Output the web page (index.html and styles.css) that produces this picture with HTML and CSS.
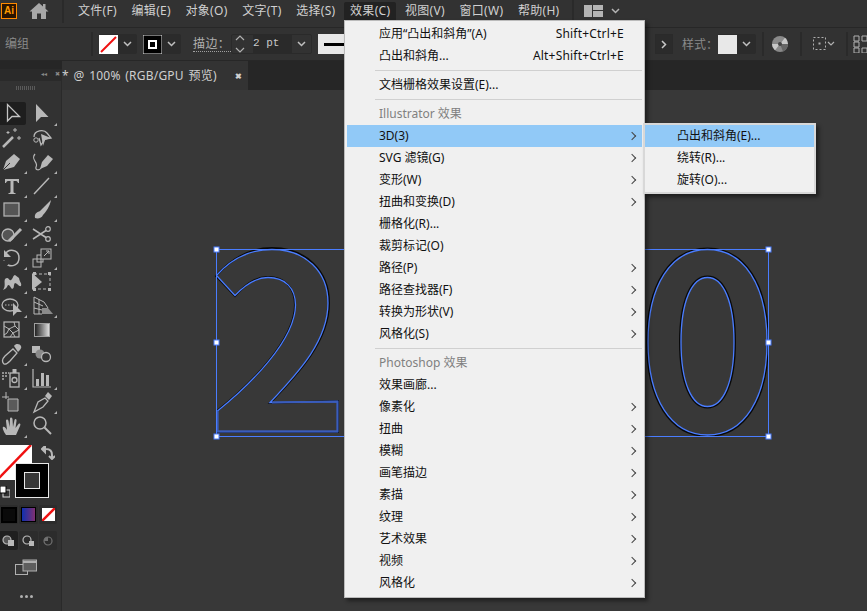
FILE: index.html
```html
<!DOCTYPE html>
<html lang="zh-CN">
<head>
<meta charset="utf-8">
<title>Illustrator</title>
<link rel="stylesheet" href="styles.css">
</head>
<body>
<div class="app">
  <header class="menubar">
    <div class="logo">Ai</div>
    <svg class="home" width="20" height="18" viewBox="0 0 20 18"><path d="M10 1 0.5 9.500H3V17H8V11.500H12V17H17V9.500H19.500L16.500 6.800V2H14V4.600Z" fill="#a8a8a8"/></svg>
    <div class="vsep home-sep"></div>
    <nav class="menus">
      <span class="m">文件(F)</span><span class="m">编辑(E)</span><span class="m">对象(O)</span><span class="m">文字(T)</span><span class="m">选择(S)</span><span class="m active">效果(C)</span><span class="m">视图(V)</span><span class="m">窗口(W)</span><span class="m">帮助(H)</span>
    </nav>
    <div class="vsep layout-sep"></div>
    <svg class="layout" width="19" height="12" viewBox="0 0 19 12"><path d="M0 0H8V12H0ZM9 0H19V5H9ZM9 6H19V12H9Z" fill="#b4b4b4"/></svg>
    <svg class="chev layout-chev" width="9" height="6" viewBox="0 0 9 6"><path d="M1 1 4.500 4.500 8 1" fill="none" stroke="#b4b4b4" stroke-width="1.500"/></svg>
  </header>

  <section class="controlbar">
    <span class="cb-label">编组</span>
    <div class="vsep cb-sep1"></div>
    <div class="combo fill-combo">
      <svg class="swatch" width="19" height="19" viewBox="0 0 19 19"><rect width="19" height="19" fill="#fff"/><path d="M2 17 17 2" stroke="#f01010" stroke-width="2"/></svg>
      <svg class="chev" width="9" height="6" viewBox="0 0 9 6"><path d="M1 1 4.500 4.500 8 1" fill="none" stroke="#c0c0c0" stroke-width="1.500"/></svg>
    </div>
    <div class="combo stroke-combo">
      <svg class="swatch" width="19" height="19" viewBox="0 0 19 19"><rect width="19" height="19" fill="#000" stroke="#e8e8e8"/><rect x="6" y="6" width="7" height="7" fill="none" stroke="#fff" stroke-width="2"/></svg>
      <svg class="chev" width="9" height="6" viewBox="0 0 9 6"><path d="M1 1 4.500 4.500 8 1" fill="none" stroke="#c0c0c0" stroke-width="1.500"/></svg>
    </div>
    <span class="stroke-label">描边：</span>
    <div class="spin">
      <svg class="updown" width="10" height="18" viewBox="0 0 10 18"><path d="M1 5 5 1 9 5M1 13 5 17 9 13" fill="none" stroke="#b0b0b0" stroke-width="1.200"/></svg>
      <span class="spin-val">2 pt</span>
      <svg class="chev" width="9" height="6" viewBox="0 0 9 6"><path d="M1 1 4.500 4.500 8 1" fill="none" stroke="#c0c0c0" stroke-width="1.500"/></svg>
    </div>
    <div class="line-box"><i></i></div>
    <div class="cb-right">
      <div class="next"><svg width="6" height="9" viewBox="0 0 6 9"><path d="M1 1 4.500 4.500 1 8" fill="none" stroke="#c8c8c8" stroke-width="1.500"/></svg></div>
      <span class="style-label">样式：</span>
      <div class="combo style-combo">
        <span class="style-swatch"></span>
        <svg class="chev" width="9" height="6" viewBox="0 0 9 6"><path d="M1 1 4.500 4.500 8 1" fill="none" stroke="#c0c0c0" stroke-width="1.500"/></svg>
      </div>
      <div class="vsep sep-a"></div>
      <svg class="globe" width="16" height="16" viewBox="0 0 16 16"><circle cx="8" cy="8" r="8" fill="#8a8a8a"/><path d="M8 8 13 1.800A8 8 0 0 1 16 8ZM8 8 3 14.200A8 8 0 0 1 0 8Z" fill="#c8c8c8"/><path d="M8 8 16 8A8 8 0 0 1 11 15.400Z" fill="#666"/><circle cx="8" cy="8" r="2" fill="#444"/></svg>
      <div class="vsep sep-b"></div>
      <svg class="align" width="23" height="16" viewBox="0 0 23 16"><rect x="1.500" y="1.500" width="12" height="12" fill="none" stroke="#b0b0b0" stroke-dasharray="2 2"/><rect x="6.500" y="6.500" width="2" height="2" fill="#b0b0b0"/><path d="M16 6 19 9 22 6" fill="none" stroke="#b0b0b0" stroke-width="1.200"/></svg>
      <div class="vsep sep-c"></div>
      <svg class="grid-ico" width="14" height="18" viewBox="0 0 14 18"><path d="M1 1H6V6H1ZM9 1H14V6H9ZM1 7H6V12H1ZM1 13H6V18H1ZM9 13H14V18H9Z" fill="none" stroke="#b0b0b0"/></svg>
    </div>
  </section>

  <main class="workspace">
    <aside class="sidebar">
      <div class="panel-head"><span class="collapse">◂◂</span><span class="close">✖</span></div>
      <div class="toolbar">
        <div class="grip"></div>
        <div class="tools">
          <div class="tool selected"><svg width="24" height="24" viewBox="0 0 24 24"><path d="M6.500 2.500V19L11 14.500H18.500Z" fill="none" stroke="#c4c4c4" stroke-width="1.300"/></svg></div>
          <div class="tool more"><svg width="24" height="24" viewBox="0 0 24 24"><path d="M6 2V20L11 15H18.500Z" fill="#b8b8b8"/></svg></div>
          <div class="tool"><svg width="24" height="24" viewBox="0 0 24 24"><path d="M3 21 13 11" stroke="#b8b8b8" stroke-width="2.500"/><path d="M15 2V6M13 4H17M8 5V8M6.500 6.500H9.500M19 10V14M17 12H21" stroke="#b8b8b8"/></svg></div>
          <div class="tool"><svg width="24" height="24" viewBox="0 0 24 24"><path d="M4 11C4 4 14 3 17 7M17 7 21 12 15 13 11 19 9 12" fill="none" stroke="#b8b8b8" stroke-width="1.300"/><path d="M11 8 21 12 15 14 13 20Z" fill="#b8b8b8"/><circle cx="6" cy="14" r="2.200" fill="none" stroke="#b8b8b8"/></svg></div>
          <div class="tool more"><svg width="24" height="24" viewBox="0 0 24 24"><path d="M3 20 6 11 14 4 20 9 14 17Z" fill="#b8b8b8"/><path d="M3 20 10 13" stroke="#323232"/></svg></div>
          <div class="tool more"><svg width="24" height="24" viewBox="0 0 24 24"><path d="M10 19 12 12 18 5 23 9 17 16Z" fill="#b8b8b8"/><path d="M5 4C0 10 9 12 6 17C5 20 9 21 11 18" fill="none" stroke="#b8b8b8" stroke-width="1.200"/></svg></div>
          <div class="tool more"><svg width="24" height="24" viewBox="0 0 24 24"><path d="M5 5H19V9H18C17.500 7.500 17 7 15 7H13.500V17.500C13.500 18.500 14 19 15.500 19V20H8.500V19C10 19 10.500 18.500 10.500 17.500V7H9C7 7 6.500 7.500 6 9H5Z" fill="#b8b8b8"/></svg></div>
          <div class="tool more"><svg width="24" height="24" viewBox="0 0 24 24"><path d="M4 20 19 4" stroke="#b8b8b8" stroke-width="1.400"/></svg></div>
          <div class="tool more"><svg width="24" height="24" viewBox="0 0 24 24"><rect x="4" y="5" width="15" height="13" fill="#555" stroke="#b0b0b0" stroke-width="1.300"/></svg></div>
          <div class="tool more"><svg width="24" height="24" viewBox="0 0 24 24"><path d="M5 20C4 15 8 14 10 13L21 2C20 8 16 14 13 17C12 20 8 21 5 20Z" fill="#b8b8b8"/></svg></div>
          <div class="tool more"><svg width="24" height="24" viewBox="0 0 24 24"><circle cx="8" cy="13" r="6" fill="#555" stroke="#b8b8b8" stroke-width="1.300"/><path d="M9 19 21 7" stroke="#b8b8b8" stroke-width="3"/></svg></div>
          <div class="tool more"><svg width="24" height="24" viewBox="0 0 24 24"><circle cx="18" cy="7" r="2.300" fill="none" stroke="#b8b8b8" stroke-width="1.200"/><circle cx="18" cy="17" r="2.300" fill="none" stroke="#b8b8b8" stroke-width="1.200"/><path d="M3 7 16 15.500M3 17 16 8.500" stroke="#b8b8b8" stroke-width="1.500"/></svg></div>
          <div class="tool more"><svg width="24" height="24" viewBox="0 0 24 24"><path d="M5 9C8 2 19 3 19 12C19 19 12 21 8 19" fill="none" stroke="#b8b8b8" stroke-width="1.500"/><path d="M4 4V11H11Z" fill="#b8b8b8"/><path d="M4 14V16M7 19 8 20" stroke="#909090" stroke-dasharray="1 1"/></svg></div>
          <div class="tool more"><svg width="24" height="24" viewBox="0 0 24 24"><rect x="3" y="13" width="8" height="8" fill="none" stroke="#b8b8b8"/><rect x="7" y="9" width="6" height="7" fill="none" stroke="#b8b8b8"/><rect x="11" y="3" width="10" height="10" fill="#323232" stroke="#b8b8b8"/><path d="M14 10 19 5M16 5H19V8" fill="none" stroke="#b8b8b8"/></svg></div>
          <div class="tool more"><svg width="24" height="24" viewBox="0 0 24 24"><path d="M3 20C7 15 2 9 7 8C9 8 9 11 11 10C13 9 13 5 15 5L19 8C20 13 22 13 21 16C19 17 17 13 15 13C13 15 15 18 12 19C10 17 10 15 8 15C7 17 6 19 3 20Z" fill="#b8b8b8"/></svg></div>
          <div class="tool"><svg width="24" height="24" viewBox="0 0 24 24"><rect x="4" y="4" width="16" height="15" fill="none" stroke="#b8b8b8" stroke-dasharray="3 2"/><path d="M2 3V20L12 12Z" fill="#b8b8b8"/><path d="M3 2H6V5H3ZM18 2H21V5H18ZM18 18H21V21H18ZM3 18H6V21H3Z" fill="#b8b8b8"/></svg></div>
          <div class="tool more"><svg width="24" height="24" viewBox="0 0 24 24"><ellipse cx="10" cy="11" rx="8" ry="6" fill="none" stroke="#b8b8b8" stroke-width="1.300"/><path d="M5 11H13" stroke="#b8b8b8" stroke-dasharray="1.500 1.500"/><path d="M13 9V22L17 18 22 18Z" fill="#b8b8b8"/></svg></div>
          <div class="tool more"><svg width="24" height="24" viewBox="0 0 24 24"><path d="M4 3V20H12M4 3 14 8 18 14M4 8 13 12M4 14 12 16M9 5V20" fill="none" stroke="#b8b8b8"/><path d="M12 14H18L23 20H12Z" fill="#8a8a8a"/></svg></div>
          <div class="tool"><svg width="24" height="24" viewBox="0 0 24 24"><rect x="4" y="4" width="15" height="15" fill="none" stroke="#b8b8b8" stroke-width="1.200"/><path d="M4 8 9 11 7 15 4 17M9 11 15 8 14 4M15 8 19 12 13 15 15 19M9 11 13 15 10 19" fill="none" stroke="#b8b8b8"/></svg></div>
          <div class="tool"><div class="gradient-tool"></div></div>
          <div class="tool more"><svg width="24" height="24" viewBox="0 0 24 24"><path d="M4 22C1 19 3 16 5 14L13 7 17 11 10 19C8 21 6 23 4 22Z" fill="none" stroke="#b8b8b8" stroke-width="1.300"/><path d="M14 4C16 1 20 2 21 4C22 6 20 8 18 10Z" fill="#b8b8b8"/></svg></div>
          <div class="tool"><svg width="24" height="24" viewBox="0 0 24 24"><rect x="2" y="4" width="8" height="7" fill="#b8b8b8"/><circle cx="10" cy="12" r="4.500" fill="#8a8a8a"/><circle cx="16" cy="15" r="4.500" fill="#323232" stroke="#b8b8b8" stroke-width="1.300"/></svg></div>
          <div class="tool more"><svg width="24" height="24" viewBox="0 0 24 24"><rect x="10" y="7" width="9" height="14" fill="none" stroke="#b8b8b8" stroke-width="1.300"/><rect x="12.500" y="3" width="4" height="4" fill="#b8b8b8"/><circle cx="14.500" cy="14" r="2.500" fill="none" stroke="#b8b8b8" stroke-width="1.300"/><path d="M2 6H4V8H2ZM5 6H7V8H5ZM8 6H9V8H8ZM2 9H4V11H2ZM5 9H7V11H5ZM2 12H4V14H2Z" fill="#909090"/></svg></div>
          <div class="tool more"><svg width="24" height="24" viewBox="0 0 24 24"><path d="M3 3V21H21" fill="none" stroke="#b8b8b8" stroke-width="1.200"/><path d="M6 13H9V20H6ZM11 7H14V20H11ZM16 9H19V20H16Z" fill="#b8b8b8"/></svg></div>
          <div class="tool"><svg width="24" height="24" viewBox="0 0 24 24"><path d="M2 7H9M6 2V9" stroke="#b8b8b8"/><path d="M8 9H18V21H8Z" fill="#5a5a5a" stroke="#b8b8b8"/></svg></div>
          <div class="tool more"><svg width="24" height="24" viewBox="0 0 24 24"><path d="M4 22 8 12 15 8 18 11 13 17Z" fill="none" stroke="#b8b8b8" stroke-width="1.300"/><path d="M15 6 18 2 22 6 19 10Z" fill="#b8b8b8"/></svg></div>
          <div class="tool more"><svg width="24" height="24" viewBox="0 0 24 24"><path d="M6 21C4 18 2 14 3 13C4 12 6 14 7 16L6 7C6 5 8 5 8.500 7L9.500 13 10 5C10 3 12 3 12.500 5L13 13 14.500 6C15 4 17 5 16.500 7L15.500 14 18.500 10C20 9 21 10 20 12L16 21Z" fill="#b8b8b8"/></svg></div>
          <div class="tool"><svg width="24" height="24" viewBox="0 0 24 24"><circle cx="10" cy="9" r="6" fill="none" stroke="#b8b8b8" stroke-width="1.500"/><path d="M14.500 13.500 21 20" stroke="#b8b8b8" stroke-width="2"/></svg></div>
        </div>
        <div class="color-block">
          <svg class="fill-big" width="32" height="35" viewBox="0 0 32 35"><rect width="32" height="35" fill="#fff"/><path d="M-1 33 31 0" stroke="#f01010" stroke-width="2.500"/></svg>
          <svg class="swap" width="14" height="14" viewBox="0 0 14 14"><path d="M1 3H5C9 3 11 5 11 9V12M1 3 4 0V6ZM8 10 11 13 14 10" fill="none" stroke="#b8b8b8" stroke-width="2"/></svg>
          <div class="stroke-big"><i></i></div>
          <svg class="default-mini" width="10" height="12" viewBox="0 0 10 12"><rect x="3" y="4" width="7" height="7" fill="#323232" stroke="#ddd"/><rect x="0" y="0" width="6" height="7" fill="#fff" stroke="#000"/></svg>
        </div>
        <div class="modes">
          <div class="mode"><i class="mode-black"></i></div>
          <div class="mode"><i class="mode-grad"></i></div>
          <div class="mode"><svg width="13" height="13" viewBox="0 0 13 13"><rect width="13" height="13" fill="#fff"/><path d="M0 13 13 0" stroke="#f01010" stroke-width="2.500"/></svg></div>
        </div>
        <div class="modes draw">
          <div class="mode on"><svg width="14" height="12" viewBox="0 0 14 12"><circle cx="5" cy="5" r="4" fill="#555" stroke="#b8b8b8" stroke-width="1.200"/><rect x="6" y="5" width="6" height="6" fill="#b8b8b8"/></svg></div>
          <div class="mode"><svg width="14" height="12" viewBox="0 0 14 12"><circle cx="5" cy="5" r="4" fill="none" stroke="#b8b8b8" stroke-width="1.200"/><rect x="7" y="6" width="5" height="5" fill="#b8b8b8"/></svg></div>
          <div class="mode"><svg width="14" height="12" viewBox="0 0 14 12"><circle cx="7" cy="6" r="4" fill="none" stroke="#707070" stroke-width="1.200"/><path d="M7 2A4 4 0 0 0 3 6H7Z" fill="#707070"/></svg></div>
        </div>
        <svg class="screen" width="22" height="16" viewBox="0 0 22 16"><rect x="0.500" y="5.500" width="12" height="10" fill="#383838" stroke="#b0b0b0"/><rect x="8" y="1" width="13.500" height="11" fill="#5e5e5e" stroke="#b0b0b0"/><path d="M8 3H21.500" stroke="#b0b0b0" stroke-width="2"/></svg>
        <div class="dots"><i></i><i></i><i></i></div>
      </div>
    </aside>

    <div class="document">
      <div class="tabbar">
        <div class="tab"><span>* @ 100% (RGB/GPU 预览)</span><b>✖</b></div>
      </div>
      <div class="canvas">
        <svg class="art" width="805" height="521" viewBox="62 90 805 521">
          <g fill="none">
            <path class="shade" d="M216 276C232 258 250 248 272 248C305 248 329 270 329 303C329 340 300 372 270 403L338 401V432H217V411C250 385 295 340 295 305C295 288 285 277 268 277C255 277 245 285 235 296Z"/>
            <path class="blue" d="M216.500 275.500C232 258 250 249.500 272 249.500C305 249.500 328 271 328 303C328 340 300 371 270 402.500L337.500 401.500V431.500H217.500V411C250 385 295.500 340 295.500 305C295.500 288 285 277.500 268 277.500C255 277.500 245 285 235 295.500Z"/>
            <path class="foot" d="M272 402.500 337.500 401.500V431.500H217.500V411"/>
            <path class="shade" d="M707.500 248.500C745 248.500 768 285 768 342C768 399 745 436 707.500 436C670 436 647 399 647 342C647 285 670 248.500 707.500 248.500Z"/>
            <path class="blue" d="M707.500 249.500C744 249.500 767 285 767 342C767 399 744 435 707.500 435C671 435 648 399 648 342C648 285 671 249.500 707.500 249.500Z"/>
            <path class="shade" d="M707.500 276.500C724 276.500 735 301 735 342C735 383 724 407.500 707.500 407.500C691 407.500 680 383 680 342C680 301 691 276.500 707.500 276.500Z"/>
            <path class="blue" d="M707.500 277.500C723 277.500 734 301 734 342C734 383 723 406.500 707.500 406.500C692 406.500 681 383 681 342C681 301 692 277.500 707.500 277.500Z"/>
            <rect class="bbox" x="216.500" y="249.500" width="552" height="187"/>
          </g>
          <g class="handles">
            <rect x="214" y="247" width="5" height="5"/><rect x="766" y="247" width="5" height="5"/>
            <rect x="214" y="340" width="5" height="5"/><rect x="766" y="340" width="5" height="5"/>
            <rect x="214" y="434" width="5" height="5"/><rect x="766" y="434" width="5" height="5"/>
          </g>
        </svg>
      </div>
    </div>

    <div class="menu main-menu">
      <div class="item"><span>应用“凸出和斜角”(A)</span><kbd>Shift+Ctrl+E</kbd></div>
      <div class="item"><span>凸出和斜角...</span><kbd>Alt+Shift+Ctrl+E</kbd></div>
      <div class="sep"></div>
      <div class="item"><span>文档栅格效果设置(E)...</span></div>
      <div class="sep"></div>
      <div class="item off"><span>Illustrator 效果</span></div>
      <div class="item sub hl"><span>3D(3)</span></div>
      <div class="item sub"><span>SVG 滤镜(G)</span></div>
      <div class="item sub"><span>变形(W)</span></div>
      <div class="item sub"><span>扭曲和变换(D)</span></div>
      <div class="item"><span>栅格化(R)...</span></div>
      <div class="item"><span>裁剪标记(O)</span></div>
      <div class="item sub"><span>路径(P)</span></div>
      <div class="item sub"><span>路径查找器(F)</span></div>
      <div class="item sub"><span>转换为形状(V)</span></div>
      <div class="item sub"><span>风格化(S)</span></div>
      <div class="sep"></div>
      <div class="item off"><span>Photoshop 效果</span></div>
      <div class="item"><span>效果画廊...</span></div>
      <div class="item sub"><span>像素化</span></div>
      <div class="item sub"><span>扭曲</span></div>
      <div class="item sub"><span>模糊</span></div>
      <div class="item sub"><span>画笔描边</span></div>
      <div class="item sub"><span>素描</span></div>
      <div class="item sub"><span>纹理</span></div>
      <div class="item sub"><span>艺术效果</span></div>
      <div class="item sub"><span>视频</span></div>
      <div class="item sub"><span>风格化</span></div>
    </div>

    <div class="menu sub-menu">
      <div class="item hl"><span>凸出和斜角(E)...</span></div>
      <div class="item"><span>绕转(R)...</span></div>
      <div class="item"><span>旋转(O)...</span></div>
    </div>
  </main>
</div>
</body>
</html>
```

FILE: styles.css
```css
* { box-sizing: border-box; }
html, body { margin: 0; height: 100%; overflow: hidden; }
body {
  background: #383838;
  color: #c8c8c8;
  font: 12px/1.2 "Noto Sans", "Noto Sans CJK SC", sans-serif;
}
.app { width: 867px; height: 611px; display: flex; flex-direction: column; position: relative; overflow: hidden; }
i, b { display: block; font-style: normal; }
.vsep { width: 2px; height: 24px; background: #2a2a2a; flex: none; }
svg { display: block; flex: none; }

.menubar { height: 28px; padding-bottom: 5px; background: #323232; border-bottom: 1px solid #272727; display: flex; align-items: center; flex: none; }
.logo { width: 16px; height: 16px; margin-left: 1px; border: 1px solid #ff8a00; background: #2a1400; color: #ff9a00; font: bold 10px/14px "Liberation Sans", sans-serif; text-align: center; }
.home { margin-left: 12px; }
.home-sep { margin-left: 13px; }
.menus { display: flex; margin-left: 8px; font-size: 12px; letter-spacing: .3px; }
.m { padding: 0 6px; margin-right: 2.6px; height: 18px; line-height: 18px; white-space: nowrap; color: #d0d0d0; }
.m.active { background: #222; border-radius: 2px 2px 0 0; }
.layout-sep { margin-left: 4px; }
.layout { margin-left: 10px; }
.layout-chev { margin-left: 8px; }

.controlbar { height: 33px; background: #323232; border-bottom: 1px solid #272727; display: flex; align-items: center; flex: none; }
.cb-label { margin-left: 5px; width: 86px; color: #8a8a8a; }
.cb-sep1 { margin-right: 6px; }
.combo { display: flex; align-items: center; height: 20px; background: #2b2b2b; border-radius: 2px; }
.combo .chev { margin: 0 5px; }
.fill-combo { width: 38px; }
.stroke-combo { width: 38px; margin-left: 6px; }
.stroke-label { margin-left: 12px; width: 38px; color: #b0b0b0; border-bottom: 1px dotted #a0a0a0; white-space: nowrap; line-height: 15px; letter-spacing: .4px; }
.spin { margin-left: 0; width: 81px; height: 20px; display: flex; align-items: center; border: 1px solid #2a2a2a; border-radius: 2px; }
.updown { margin-left: 3px; }
.spin-val { flex: 1; margin-left: 8px; padding-right: 6px; height: 18px; background: #2a2a2a; font: 11px/16px "Liberation Mono", monospace; color: #c8c8c8; }
.spin .chev { margin: 0 5px; }
.line-box { width: 30px; height: 20px; margin-left: 6px; background: #e8e8e8; display: flex; align-items: center; padding-left: 6px; }
.line-box i { width: 24px; height: 3px; background: #000; }
.cb-right { margin-left: auto; display: flex; align-items: center; }
.next { width: 18px; height: 20px; background: #2b2b2b; border: 1px solid #2a2a2a; display: flex; align-items: center; justify-content: center; }
.style-label { color: #8a8a8a; white-space: nowrap; width: 36px; margin-left: 9px; padding-top: 2px; }
.style-swatch { width: 19px; height: 19px; background: #e8e8e8; }
.style-combo { width: 38px; }
.sep-a { margin-left: 6px; }
.globe { margin-left: 8px; }
.sep-b { margin-left: 12px; }
.align { margin-left: 10px; }
.sep-c { margin-left: 11px; }
.grid-ico { margin-left: 5px; }

.workspace { flex: 1; display: flex; min-height: 0; }
.sidebar { width: 62px; flex: none; background: #262626; padding-top: 8px; display: flex; flex-direction: column; }
.panel-head { height: 12px; background: #2a2a2a; display: flex; justify-content: flex-end; align-items: center; color: #8a8a8a; font-size: 6px; gap: 8px; padding-right: 2px; flex: none; }
.toolbar { flex: 1; background: #323232; border-right: 1px solid #2a2a2a; position: relative; display: flex; flex-direction: column; }
.grip { height: 4px; margin: 5px 0 0 16px; width: 19px; background: repeating-linear-gradient(90deg, #5a5a5a 0 1px, transparent 1px 2px); flex: none; }
.tools { display: grid; grid-template-columns: 24px 24px; column-gap: 6px; grid-auto-rows: 24px; margin-top: 12px; flex: none; }
.tool { position: relative; display: flex; align-items: center; justify-content: center; width: 24px; height: 24px; }
.tool.more::after { content: ""; position: absolute; right: -3px; bottom: 0; border-style: solid; border-width: 0 0 3px 3px; border-color: transparent transparent #b0b0b0 transparent; }
.tool.selected { background: #1e1e1e; width: 26px; height: 23px; border-radius: 0 2px 2px 0; }
.gradient-tool { width: 16px; height: 14px; background: linear-gradient(90deg, #222, #ddd); border: 1px solid #a0a0a0; }
.color-block { position: relative; height: 58px; margin-top: 7px; flex: none; }
.fill-big { position: absolute; left: 0; top: 0; }
.swap { position: absolute; left: 41px; top: 1px; }
.stroke-big { position: absolute; left: 15px; top: 18px; width: 34px; height: 35px; background: #000; border: 1px solid #e8e8e8; padding: 8px; }
.stroke-big i { width: 100%; height: 100%; background: #383838; border: 1px solid #e8e8e8; }
.default-mini { position: absolute; left: 0; top: 41px; }
.modes { display: grid; grid-template-columns: 19px 19px 18px; gap: 1px; height: 19px; margin: 2px 0 0 -1px; width: 57px; flex: none; }
.modes.draw { margin-top: 7px; }
.mode { display: flex; align-items: center; justify-content: center; background: #2c2c2c; border-radius: 2px; }
.mode.on { background: #1f1f1f; }
.mode-black { width: 12px; height: 12px; background: #0a0a0a; outline: 2px solid #000; }
.mode-grad { width: 13px; height: 13px; background: linear-gradient(90deg, #1030b0, #803070); outline: 1px solid #000; }
.screen { margin: 9px 0 0 15px; }
.dots { display: flex; gap: 2px; margin: 20px 0 0 20px; }
.dots i { width: 3px; height: 3px; border-radius: 50%; background: #b0b0b0; }

.document { flex: 1; display: flex; flex-direction: column; min-width: 0; }
.tabbar { height: 29px; background: #262626; flex: none; }
.tab { width: 186px; height: 29px; padding-top: 1px; background: #333; display: flex; align-items: center; white-space: nowrap; font-size: 12px; color: #cfcfcf; letter-spacing: .2px; word-spacing: 1.4px; }
.tab b { margin-left: 18px; font-size: 8px; color: #d0d0d0; }
.canvas { flex: 1; background: #383838; position: relative; }
.art { position: absolute; left: 0; top: 0; }
.shade { stroke: #000; stroke-width: 2; opacity: .85; }
.blue { stroke: #4a7dff; stroke-width: 1.300; }
.foot { stroke: #3a5cbc; stroke-width: 2; }
.bbox { stroke: #4a7dff; stroke-width: 1; }
.handles rect { fill: #fff; stroke: #4a7dff; stroke-width: 1; }

.menu { position: absolute; background: #f0f0f0; border: 1px solid #d2d2d2; color: #111; font-size: 12px; box-shadow: 3px 3px 4px rgba(0,0,0,.45); }
.main-menu { left: 344px; top: 20px; width: 301px; height: 578px; padding: 2px 2px 0; border-color: #bbb; }
.sub-menu { left: 643px; top: 123px; width: 173px; height: 71px; border: 2px solid #d8d8d8; }
.item { height: 22px; line-height: 22px; padding: 0 18px 0 32px; display: flex; justify-content: space-between; white-space: nowrap; position: relative; color: #111; }
.item kbd { font: inherit; letter-spacing: .2px; }
.item.off { color: #808080; }
.item.hl { background: #91c9f7; }
.item.sub::after { content: ""; position: absolute; right: 7px; top: 8px; width: 5px; height: 5px; border-top: 1px solid #444; border-right: 1px solid #444; transform: rotate(45deg); }
.sep { height: 1px; margin: 3px 0 3px 28px; background: #d0d0d0; }
```
